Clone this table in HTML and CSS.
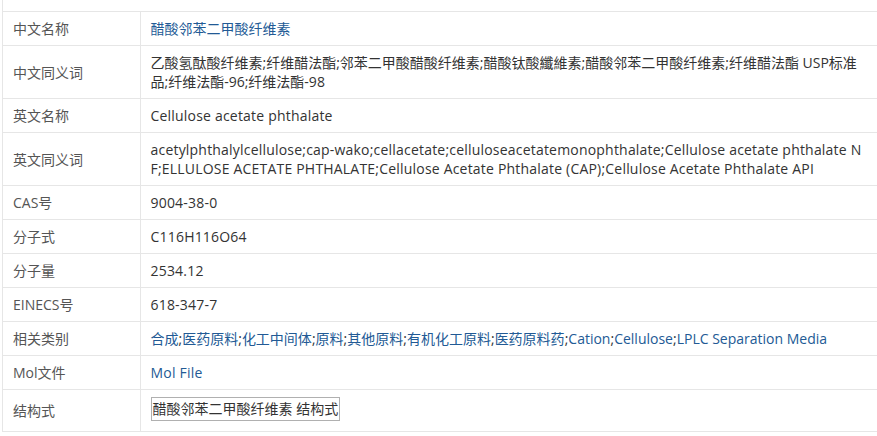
FILE: index.html
```html
<!DOCTYPE html>
<html lang="zh-CN">
<head>
    <meta charset="UTF-8">
    <title>醋酸邻苯二甲酸纤维素</title>
    <link rel="stylesheet" href="styles.css">
</head>
<body>
    <div class="detail">
        <table class="info-table">
            <tr>
                <td class="label">中文名称</td>
                <td class="value"><a href="#">醋酸邻苯二甲酸纤维素</a></td>
            </tr>
            <tr>
                <td class="label">中文同义词</td>
                <td class="value">乙酸氢酞酸纤维素;纤维醋法酯;邻苯二甲酸醋酸纤维素;醋酸钛酸纖維素;醋酸邻苯二甲酸纤维素;纤维醋法酯 USP标准品;纤维法酯-96;纤维法酯-98</td>
            </tr>
            <tr>
                <td class="label">英文名称</td>
                <td class="value en">Cellulose acetate phthalate</td>
            </tr>
            <tr>
                <td class="label">英文同义词</td>
                <td class="value en">acetylphthalylcellulose;cap-wako;cellacetate;celluloseacetatemonophthalate;Cellulose acetate phthalate NF;ELLULOSE ACETATE PHTHALATE;Cellulose Acetate Phthalate (CAP);Cellulose Acetate Phthalate API</td>
            </tr>
            <tr>
                <td class="label">CAS号</td>
                <td class="value en">9004-38-0</td>
            </tr>
            <tr>
                <td class="label">分子式</td>
                <td class="value en">C116H116O64</td>
            </tr>
            <tr>
                <td class="label">分子量</td>
                <td class="value en">2534.12</td>
            </tr>
            <tr>
                <td class="label">EINECS号</td>
                <td class="value en">618-347-7</td>
            </tr>
            <tr>
                <td class="label">相关类别</td>
                <td class="value"><a href="#">合成</a>;<a href="#">医药原料</a>;<a href="#">化工中间体</a>;<a href="#">原料</a>;<a href="#">其他原料</a>;<a href="#">有机化工原料</a>;<a href="#">医药原料药</a>;<a href="#">Cation</a>;<a href="#">Cellulose</a>;<a href="#">LPLC Separation Media</a></td>
            </tr>
            <tr>
                <td class="label">Mol文件</td>
                <td class="value en"><a href="#">Mol File</a></td>
            </tr>
            <tr>
                <td class="label">结构式</td>
                <td class="value struct-cell"><span class="struct-img">醋酸邻苯二甲酸纤维素 结构式</span></td>
            </tr>
        </table>
    </div>
</body>
</html>
```

FILE: styles.css
```css
* {
    margin: 0;
    padding: 0;
    box-sizing: border-box;
}

html, body {
    overflow: hidden;
}

body {
    font-family: "Open Sans", "Noto Sans CJK SC", sans-serif;
    font-size: 14px;
    color: #333;
    background: #fff;
}

.detail {
    margin-left: 2px;
    padding-top: 11px;
    border-left: 1px solid #e6e6e6;
    width: 900px;
}

.info-table {
    width: 898px;
    border-collapse: collapse;
    table-layout: fixed;
}

.info-table td {
    border: 1px solid #e6e6e6;
    padding: 7px 10px;
    line-height: 19px;
    vertical-align: middle;
}

.info-table td:first-child {
    border-left: none;
}

.label {
    width: 137px;
    color: #555;
}

.value {
    padding-right: 36px !important;
    word-break: break-all;
}

.value.en {
    letter-spacing: 0.2px;
}

.value a {
    color: #225a95;
    text-decoration: none;
}

.struct-cell {
    padding-top: 7px !important;
    padding-bottom: 10px !important;
}

.struct-img {
    display: inline-block;
    vertical-align: top;
    height: 24px;
    line-height: 22px;
    padding: 0 1px;
    border: 1px solid #b0b0b0;
    color: #333;
}
```
